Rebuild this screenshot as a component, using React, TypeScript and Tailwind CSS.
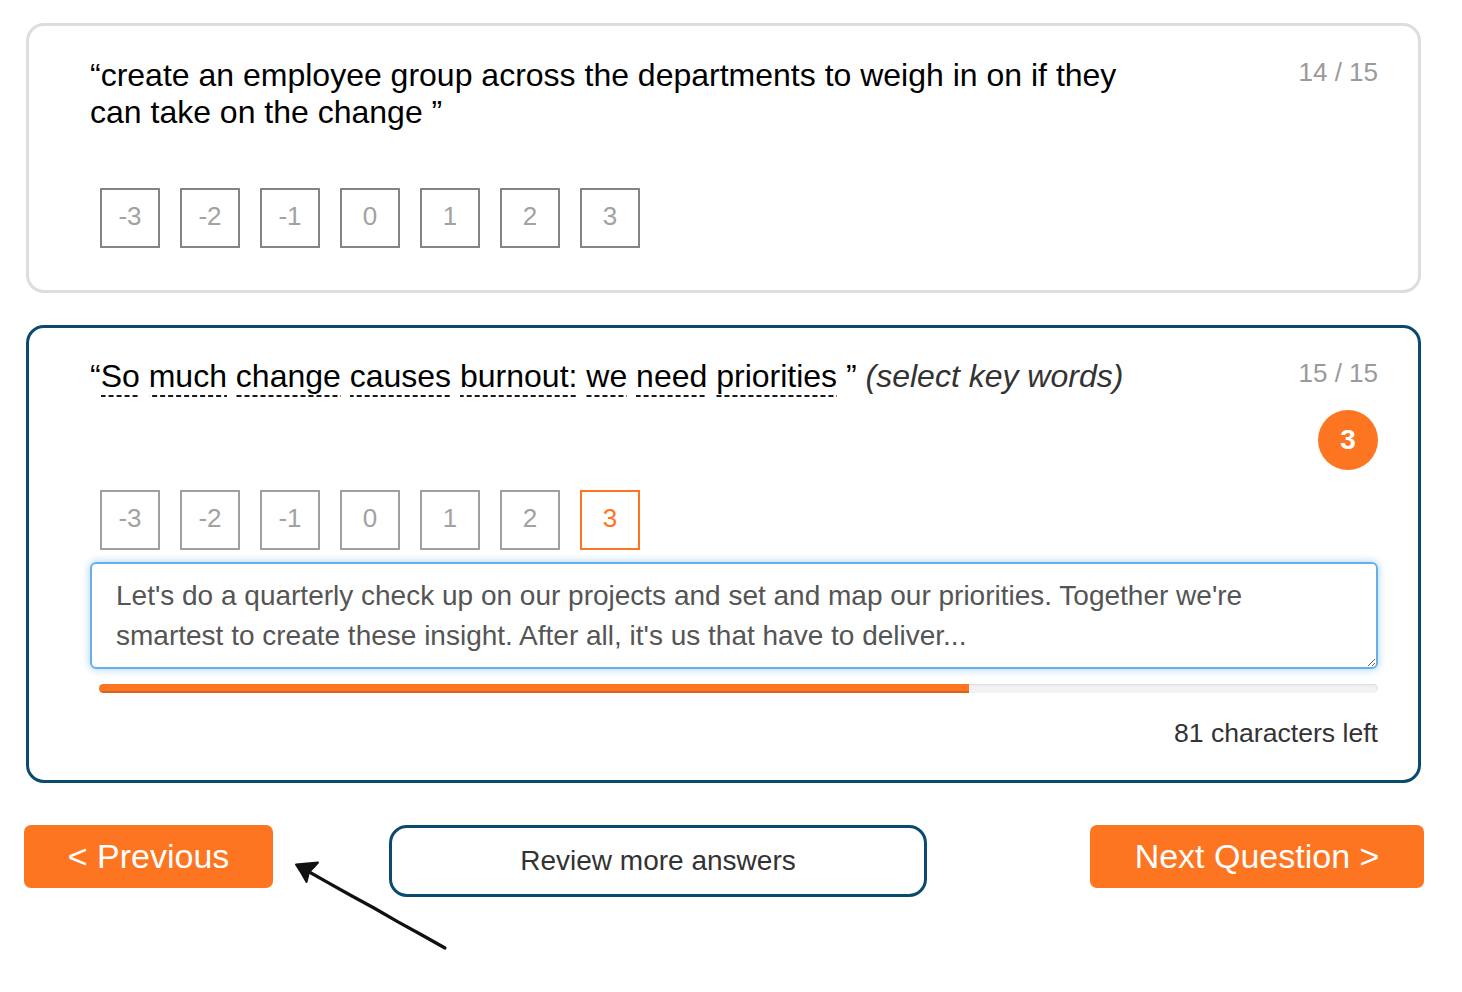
import React from "react";

const SCALE = ["-3", "-2", "-1", "0", "1", "2", "3"];

function ScaleRow({ selected, dim }: { selected?: string; dim?: boolean }) {
  return (
    <div className="flex gap-[20px]">
      {SCALE.map((v) => {
        const on = v === selected;
        return (
          <div
            key={v}
            className={
              on
                ? "w-[60px] h-[60px] pb-[5px] flex items-center justify-center border-2 border-[#fd7521] text-[#fd7521] text-[26px] leading-none"
                : dim
                ? "w-[60px] h-[60px] pb-[5px] flex items-center justify-center border-2 border-[#848484] text-[#a2a2a2] text-[26px] leading-none"
                : "w-[60px] h-[60px] pb-[5px] flex items-center justify-center border-2 border-[#a0a0a0] text-[#a2a2a2] text-[26px] leading-none"
            }
          >
            {v}
          </div>
        );
      })}
    </div>
  );
}

function Word({ children }: { children: React.ReactNode }) {
  return (
    <span className="pb-[3px] bg-[linear-gradient(to_right,#1a1a1a_5px,transparent_5px)] bg-[length:8px_2px] bg-repeat-x bg-bottom">
      {children}
    </span>
  );
}

function HandArrow() {
  return (
    <svg
      className="absolute left-[290px] top-[855px]"
      width="165"
      height="100"
      viewBox="0 0 165 100"
      fill="none"
    >
      {/* sketched shaft */}
      <path
        d="M155 93 L131 79.5 L108 66.8 L84 53 L61 40.5 L38 27.6 L14 14"
        stroke="#111"
        strokeWidth="3.2"
        strokeLinecap="round"
        strokeLinejoin="round"
      />
      <path
        d="M153 92.5 L120 74 L90 57 L60 39.5 L22 18.5"
        stroke="#111"
        strokeWidth="1.4"
        strokeLinecap="round"
      />
      {/* arrow head */}
      <path
        d="M6 9.5 L28 7.5 L24 12 L19 17 L16.5 27 L12 19 Z"
        fill="#111"
        stroke="#111"
        strokeWidth="2"
        strokeLinejoin="round"
      />
    </svg>
  );
}

export default function App() {
  return (
    <div className="relative w-[1462px] h-[992px] bg-white font-['Liberation_Sans',Arial,Helvetica,sans-serif] text-black overflow-hidden">
      <div className="pt-[23px]">
        {/* question 14 */}
        <div className="ml-[26px] w-[1395px] border-[3px] border-[#dddddd] rounded-[18px] pl-[61px] pr-[40px] pt-[31px] pb-[42px]">
          <div className="flex justify-between items-start">
            <p className="w-[1050px] text-[32px] leading-[37px] text-black">
              “create an employee group across the departments to weigh in on if they can take on the change ”
            </p>
            <span className="text-[26px] leading-[30px] text-[#9a9a9a]">14 / 15</span>
          </div>
          <div className="mt-[57px] ml-[10px]">
            <ScaleRow dim />
          </div>
        </div>

        {/* question 15 */}
        <div className="mt-[32px] ml-[26px] w-[1395px] border-[3px] border-[#0b4a6f] rounded-[18px] pl-[61px] pr-[40px] pt-[30px] pb-[32px]">
          <div className="flex justify-between items-start">
            <p className="text-[32px] leading-[37px] text-black whitespace-nowrap">
              “<Word>So</Word> <Word>much</Word> <Word>change</Word> <Word>causes</Word>{" "}
              <Word>burnout:</Word> <Word>we</Word> <Word>need</Word> <Word>priorities</Word> ”{" "}
              <span className="italic text-[#333333]">(select key words)</span>
            </p>
            <span className="text-[26px] leading-[30px] text-[#9a9a9a]">15 / 15</span>
          </div>
          <div className="mt-[15px] flex justify-end">
            <div className="w-[60px] h-[60px] rounded-full bg-[#fd7521] text-white font-bold text-[28px] flex items-center justify-center">
              3
            </div>
          </div>
          <div className="mt-[20px] ml-[10px]">
            <ScaleRow selected="3" />
          </div>
          <textarea
            readOnly
            rows={2}
            defaultValue="Let's do a quarterly check up on our projects and set and map our priorities. Together we're smartest to create these insight. After all, it's us that have to deliver..."
            className="mt-[12px] block w-full h-[107px] border-2 border-[#66afe9] rounded-[6px] pl-[24px] pr-[24px] pt-[12px] pb-[11px] text-[28px] leading-[40px] text-[#555555] outline-none shadow-[0_0_9px_rgba(102,175,233,0.6)]"
          />
          <div className="mt-[15px] ml-[9px] h-[9px] rounded-[5px] bg-[#f2f2f2] shadow-[inset_0_1px_2px_rgba(0,0,0,0.1)] overflow-hidden">
            <div className="h-full w-[68%] bg-[#fd7521] shadow-[inset_0_-2px_0_rgba(0,0,0,0.15)]" />
          </div>
          <div className="mt-[25px] text-right text-[26.6px] leading-[30px] text-[#333333]">
            81 characters left
          </div>
        </div>

        {/* navigation */}
        <div className="mt-[42px] pl-[24px] pr-[38px] flex items-start">
          <button className="w-[249px] h-[63px] pb-[2px] rounded-[7px] bg-[#fd7521] text-white text-[34px] leading-none flex items-center justify-center">
            &lt; Previous
          </button>
          <button className="ml-[116px] w-[538px] h-[72px] rounded-[18px] border-[3px] border-[#0b4a6f] bg-white text-[#333333] text-[28px] leading-none flex items-center justify-center">
            Review more answers
          </button>
          <button className="ml-auto w-[334px] h-[63px] pb-[2px] rounded-[7px] bg-[#fd7521] text-white text-[34px] leading-none flex items-center justify-center">
            Next Question &gt;
          </button>
        </div>
      </div>
      <HandArrow />
    </div>
  );
}
